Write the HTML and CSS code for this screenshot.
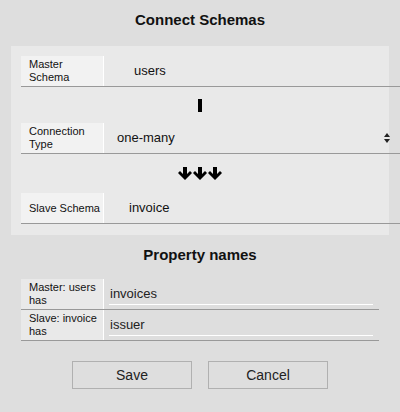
FILE: index.html
```html
<!DOCTYPE html>
<html>
<head>
<meta charset="utf-8">
<link rel="stylesheet" href="styles.css">
</head>
<body>
<div class="dialog">
  <h1 class="title">Connect Schemas</h1>
  <div class="panel">
    <div class="row">
      <div class="label">Master<br>Schema</div>
      <div class="value value-master">users</div>
    </div>
    <div class="connector">
      <svg width="4" height="13" viewBox="0 0 4 13"><rect x="0" y="0" width="4" height="13" fill="#000"/></svg>
    </div>
    <div class="row">
      <div class="label">Connection<br>Type</div>
      <div class="value value-select">
        <span>one-many</span>
        <svg class="updown" width="6" height="10" viewBox="0 0 6 10"><path d="M3 0 L6 4 L0 4 Z M0 6 L6 6 L3 10 Z" fill="#222"/></svg>
      </div>
    </div>
    <div class="connector arrows">
      <svg width="44" height="14" viewBox="0 0 44 14">
        <g fill="#000">
          <path d="M5 0 h4 v7 l3 -3 l2 2 l-7 7 l-7 -7 l2 -2 l3 3 z"/>
          <path d="M20 0 h4 v7 l3 -3 l2 2 l-7 7 l-7 -7 l2 -2 l3 3 z"/>
          <path d="M35 0 h4 v7 l3 -3 l2 2 l-7 7 l-7 -7 l2 -2 l3 3 z"/>
        </g>
      </svg>
    </div>
    <div class="row">
      <div class="label label-single">Slave Schema</div>
      <div class="value value-slave">invoice</div>
    </div>
  </div>
  <h2 class="subtitle">Property names</h2>
  <div class="props">
    <div class="prop-row">
      <div class="prop-label">Master: users<br>has</div>
      <div class="prop-input"><span>invoices</span></div>
    </div>
    <div class="prop-row">
      <div class="prop-label">Slave: invoice<br>has</div>
      <div class="prop-input"><span>issuer</span></div>
    </div>
  </div>
  <div class="buttons">
    <button class="btn">Save</button>
    <button class="btn">Cancel</button>
  </div>
</div>
</body>
</html>
```

FILE: styles.css
```css
html, body {
  margin: 0;
  padding: 0;
}
body {
  width: 400px;
  height: 412px;
  background: #dedede;
  font-family: "Liberation Sans", Arial, sans-serif;
  color: #111;
  overflow: hidden;
}
.dialog {
  display: flex;
  flex-direction: column;
}
.title {
  margin: 0;
  height: 46px;
  line-height: 40px;
  font-size: 15px;
  font-weight: bold;
  text-align: center;
}
.panel {
  margin: 0 11px;
  background: #e9e9e9;
  padding: 10px 0 11px 10px;
  display: flex;
  flex-direction: column;
}
.row {
  display: flex;
  width: 379px;
  height: 30px;
  border-bottom: 1px solid #999;
}
.label {
  width: 83px;
  background: #f2f2f2;
  border-right: 1px solid #fff;
  font-size: 11px;
  line-height: 13px;
  padding: 2px 0 0 8px;
  box-sizing: border-box;
}
.label-single {
  padding-top: 0;
  line-height: 30px;
}
.value {
  flex: 1;
  font-size: 13px;
  line-height: 30px;
}
.value-master { padding-left: 30px; }
.value-slave { padding-left: 25px; }
.value-select {
  display: flex;
  align-items: center;
  justify-content: space-between;
  padding-left: 13px;
  padding-right: 10px;
  line-height: 28px;
}
.updown { display: block; }
.connector {
  height: 36px;
  display: flex;
  align-items: center;
  justify-content: center;
  padding-right: 10px;
}
.connector svg { display: block; }
.arrows {
  height: 39px;
}
.subtitle {
  margin: 0;
  height: 44px;
  line-height: 40px;
  font-size: 15px;
  font-weight: bold;
  text-align: center;
}
.props {
  margin: 0 21px;
  display: flex;
  flex-direction: column;
}
.prop-row {
  display: flex;
  height: 30px;
  border-bottom: 1px solid #999;
}
.prop-label {
  width: 83px;
  background: #e9e9e9;
  border-right: 1px solid #fff;
  font-size: 11px;
  line-height: 13px;
  padding: 2px 0 0 8px;
  box-sizing: border-box;
}
.prop-input {
  width: 264px;
  margin-left: 5px;
  height: 26px;
  border-bottom: 1px solid #fff;
  font-size: 13px;
  line-height: 30px;
  color: #222;
  padding-left: 1px;
  box-sizing: border-box;
}
.buttons {
  display: flex;
  justify-content: center;
  gap: 16px;
  margin-top: 20px;
}
.btn {
  width: 120px;
  height: 28px;
  background: #dedede;
  border: 1px solid #b0b0b0;
  font-family: "Liberation Sans", Arial, sans-serif;
  font-size: 14px;
  color: #222;
  padding: 0;
}
```
